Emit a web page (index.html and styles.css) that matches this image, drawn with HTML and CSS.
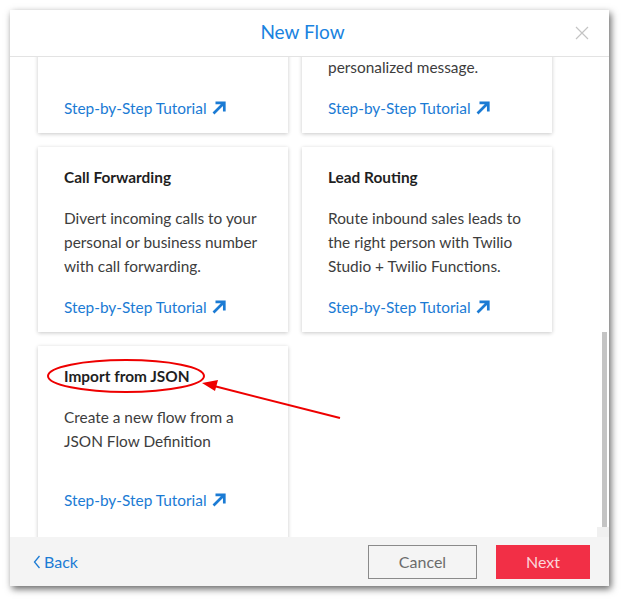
FILE: index.html
```html
<!DOCTYPE html>
<html>
<head>
<meta charset="utf-8">
<link rel="stylesheet" href="styles.css">
</head>
<body>
<div class="dialog">
  <div class="header">
    <h1 class="title">New Flow</h1>
    <svg class="close" width="14" height="14" viewBox="0 0 14 14"><path d="M1 1L13 13M13 1L1 13" stroke="#c4c4c4" stroke-width="1.2" fill="none"/></svg>
  </div>
  <div class="content">
    <div class="grid">
      <div class="card">
        <div class="card-title">Messaging Chatbot</div>
        <div class="card-desc">Build an automated chatbot<br>to answer common questions.</div>
        <a class="card-link">Step-by-Step Tutorial <svg class="ext" width="14" height="14" viewBox="0 0 14 14"><path d="M1.5 12.5L12 2M3.5 1.8H12.3V10.5" stroke="#1b7bd4" stroke-width="2.7" fill="none"/></svg></a>
      </div>
      <div class="card">
        <div class="card-title">Appointment Reminders</div>
        <div class="card-desc">Remind customers about<br>upcoming appointments with a<br>personalized message.</div>
        <a class="card-link">Step-by-Step Tutorial <svg class="ext" width="14" height="14" viewBox="0 0 14 14"><path d="M1.5 12.5L12 2M3.5 1.8H12.3V10.5" stroke="#1b7bd4" stroke-width="2.7" fill="none"/></svg></a>
      </div>
      <div class="card">
        <div class="card-title">Call Forwarding</div>
        <div class="card-desc">Divert incoming calls to your personal or business number with call forwarding.</div>
        <a class="card-link">Step-by-Step Tutorial <svg class="ext" width="14" height="14" viewBox="0 0 14 14"><path d="M1.5 12.5L12 2M3.5 1.8H12.3V10.5" stroke="#1b7bd4" stroke-width="2.7" fill="none"/></svg></a>
      </div>
      <div class="card">
        <div class="card-title">Lead Routing</div>
        <div class="card-desc">Route inbound sales leads to the right person with Twilio Studio + Twilio Functions.</div>
        <a class="card-link">Step-by-Step Tutorial <svg class="ext" width="14" height="14" viewBox="0 0 14 14"><path d="M1.5 12.5L12 2M3.5 1.8H12.3V10.5" stroke="#1b7bd4" stroke-width="2.7" fill="none"/></svg></a>
      </div>
      <div class="card card-last">
        <div class="card-title">Import from JSON</div>
        <div class="card-desc">Create a new flow from a JSON Flow Definition</div>
        <a class="card-link">Step-by-Step Tutorial <svg class="ext" width="14" height="14" viewBox="0 0 14 14"><path d="M1.5 12.5L12 2M3.5 1.8H12.3V10.5" stroke="#1b7bd4" stroke-width="2.7" fill="none"/></svg></a>
      </div>
    </div>
    <div class="scroll-thumb"></div>
    <div class="scroll-corner"></div>
  </div>
  <div class="footer">
    <a class="back"><svg width="8" height="14" viewBox="0 0 8 14"><path d="M6.5 1L1.5 7L6.5 13" stroke="#1b7bd4" stroke-width="1.3" fill="none"/></svg>Back</a>
    <div class="actions">
      <button class="btn btn-cancel">Cancel</button>
      <button class="btn btn-next">Next</button>
    </div>
  </div>
</div>
<svg class="annotation" width="626" height="604" viewBox="0 0 626 604">
  <ellipse cx="126" cy="376" rx="78" ry="16" stroke="#ee0000" stroke-width="2" fill="none"/>
  <path d="M340 418L214 386" stroke="#ee0000" stroke-width="2" fill="none"/>
  <path d="M202 383L218 380L215 391Z" fill="#ee0000"/>
</svg>
</body>
</html>
```

FILE: styles.css
```css
* { box-sizing: border-box; }
html, body { margin: 0; padding: 0; background: #ffffff; }
body {
  font-family: Lato, "Open Sans", "Liberation Sans", sans-serif;
  width: 626px;
  height: 604px;
  position: relative;
  overflow: hidden;
}
.dialog {
  margin: 10px 0 0 10px;
  width: 599px;
  height: 576px;
  background: #fff;
  display: flex;
  flex-direction: column;
  box-shadow: 2px 3px 7px rgba(0, 0, 0, 0.6);
}
.header {
  height: 47px;
  border-bottom: 1px solid #e3e3e3;
  display: flex;
  align-items: center;
  justify-content: center;
  position: relative;
  flex: none;
  padding-right: 14px;
}
.title {
  margin: 0;
  font-weight: 400;
  font-size: 19px;
  color: #1a83e0;
  line-height: 24px;
  padding-bottom: 3px;
}
.close {
  position: absolute;
  right: 20px;
  top: 16px;
}
.content {
  height: 480px;
  overflow: hidden;
  position: relative;
  flex: none;
}
.grid {
  display: grid;
  grid-template-columns: 250px 250px;
  column-gap: 14px;
  row-gap: 14px;
  padding-left: 28px;
  margin-top: -109px;
}
.card {
  background: #fff;
  box-shadow: 0 1px 4px rgba(0, 0, 0, 0.22);
  padding: 18px 16px 13px 26px;
  display: flex;
  flex-direction: column;
  min-height: 185px;
}
.card-last { padding-bottom: 32px; }
.card-title {
  font-weight: 700;
  font-size: 15.4px;
  line-height: 24px;
  color: #1f1f1f;
}
.card-desc {
  margin-top: 17px;
  font-size: 15.4px;
  line-height: 24px;
  color: #3d3d3d;
  min-height: 66px;
  flex: 1;
}
.card-link {
  margin-top: 17px;
  font-size: 15.4px;
  line-height: 24px;
  color: #1b7bd4;
  display: flex;
  align-items: center;
  gap: 5px;
}
.ext { flex: none; }
.scroll-thumb {
  position: absolute;
  right: 2px;
  top: 275px;
  width: 5px;
  height: 195px;
  background: #c4c4c4;
}
.scroll-corner {
  position: absolute;
  right: 0;
  bottom: 0;
  width: 12px;
  height: 10px;
  background: #f0f0f0;
}
.footer {
  flex: 1;
  background: #f4f4f4;
  display: flex;
  align-items: flex-start;
  justify-content: space-between;
  padding: 8px 19px 0 23px;
}
.back {
  display: flex;
  align-items: center;
  gap: 3px;
  font-size: 16px;
  line-height: 34px;
  color: #1b7bd4;
}
.actions {
  display: flex;
  gap: 19px;
}
.btn {
  height: 34px;
  font-family: inherit;
  font-size: 16px;
  border-radius: 0;
  padding: 0 0 2px;
}
.btn-cancel {
  width: 109px;
  background: transparent;
  border: 1px solid #8a8a8a;
  color: #6b6b6b;
}
.btn-next {
  width: 94px;
  background: #f22f46;
  border: none;
  color: #fbd5da;
}
.annotation {
  position: absolute;
  left: 0;
  top: 0;
  pointer-events: none;
}
```
